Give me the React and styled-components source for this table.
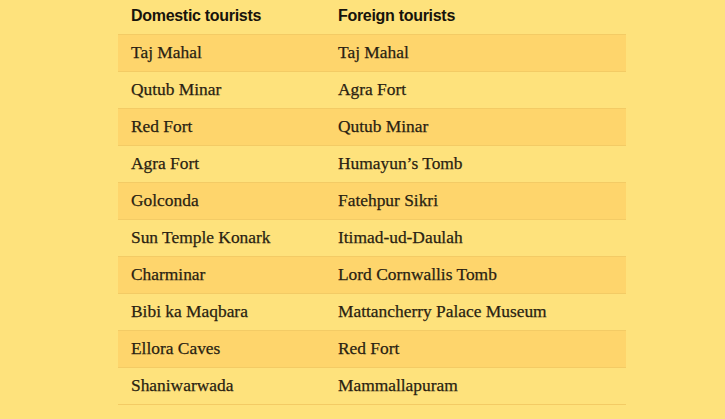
import styled, { createGlobalStyle } from 'styled-components';

const GlobalStyle = createGlobalStyle`
    html, body {
        margin: 0;
        padding: 0;
        background: #fee27c;
    }
`;

const rows = [
    ['Taj Mahal', 'Taj Mahal'],
    ['Qutub Minar', 'Agra Fort'],
    ['Red Fort', 'Qutub Minar'],
    ['Agra Fort', 'Humayun’s Tomb'],
    ['Golconda', 'Fatehpur Sikri'],
    ['Sun Temple Konark', 'Itimad-ud-Daulah'],
    ['Charminar', 'Lord Cornwallis Tomb'],
    ['Bibi ka Maqbara', 'Mattancherry Palace Museum'],
    ['Ellora Caves', 'Red Fort'],
    ['Shaniwarwada', 'Mammallapuram'],
];

function App() {
    return (
        <>
            <GlobalStyle />
            <Page>
                <Table>
                    <thead>
                        <tr>
                            <Head>Domestic tourists</Head>
                            <Head>Foreign tourists</Head>
                        </tr>
                    </thead>
                    <tbody>
                        {rows.map(([dom, foreign], i) => (
                            <Row key={i} $striped={i % 2 === 0}>
                                <Cell>{dom}</Cell>
                                <Cell>{foreign}</Cell>
                            </Row>
                        ))}
                    </tbody>
                </Table>
            </Page>
        </>
    );
}

export default App;

const Page = styled.div`
    width: 725px;
    height: 419px;
    padding-left: 118px;
    box-sizing: border-box;
    background: #fee27c;
`;

const Table = styled.table`
    width: 508px;
    border-collapse: collapse;
    table-layout: fixed;
`;

const Head = styled.th`
    height: 34px;
    padding: 0 0 2px 13px;
    box-sizing: border-box;
    text-align: left;
    vertical-align: middle;
    font-family: "Liberation Sans", Arial, sans-serif;
    font-weight: 700;
    font-size: 16px;
    letter-spacing: -0.3px;
    color: #17130b;
    border-bottom: 1px solid #f3cb65;

    &:first-child {
        width: 207px;
    }
`;

const Row = styled.tr`
    background: ${(p) => (p.$striped ? '#fed56c' : 'transparent')};
    border-bottom: 1px solid #f3cb65;
`;

const Cell = styled.td`
    height: 37px;
    padding: 0 0 1px 13px;
    box-sizing: border-box;
    vertical-align: middle;
    font-family: "Liberation Serif", "Times New Roman", serif;
    font-size: 17.4px;
    color: #2a1f12;
    -webkit-text-stroke: 0.25px #2a1f12;
`;
